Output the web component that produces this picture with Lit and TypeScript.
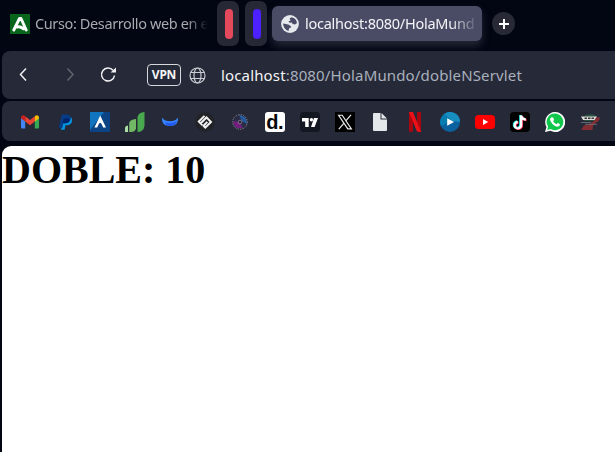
import { LitElement, html, svg, css } from "lit";
import { customElement } from "lit/decorators.js";

const bookmarks = [
  // Gmail
  svg`<path fill="#4285f4" d="M1 5.500V15.500Q1 16.500 2 16.500H5.200V8z"/><path fill="#34a853" d="M14.800 8V16.500H18Q19 16.500 19 15.500V5.500z"/><path fill="#ea4335" d="M5.200 4.200L10 8L14.800 4.200V9.500L10 13.200L5.200 9.500z"/><path fill="#c5221f" d="M1 5.500Q1 3.500 3 3.300Q4.200 3.300 5.200 4.200V9.500L1 6.500z"/><path fill="#fbbc04" d="M19 5.500Q19 3.500 17 3.300Q15.800 3.300 14.800 4.200V9.500L19 6.500z"/>`,
  // PayPal
  svg`<path fill="#0094dc" d="M15.500 5.200Q17.800 6.500 17 9.600Q16 13.300 12 13.300H10.500L9.600 17.800H6L7.500 10z"/><path fill="#063b85" d="M6.700 2.500H12Q16.300 2.800 15.500 7Q14.500 11.300 10 11.300H8.200L7.200 16H3.800z"/><path fill="#00246b" d="M8.600 6.500Q12 5.500 15.400 7.200Q14.300 11.300 10 11.300H7.700z"/>`,
  // Blue peak
  svg`<path fill="#0c4385" d="M0 0H20V20H0z"/><path fill="#1174be" d="M0 0H14L0 18z"/><path fill="#fff" d="M10.200 3.500L16 15.500H13.200L10.200 9L7.200 15.500H4.400z"/><path fill="#fff" d="M10.200 8L12.200 12L10.200 10.800L8.200 12z"/>`,
  // Green bars
  svg`<path fill="#a9dda3" d="M0 15.500Q0 14 3 13.500V20H0z"/><path fill="#72b966" d="M4.200 11Q4.800 7.500 11 7V16.500Q10 20 6 20H4.200z"/><path fill="#48a94e" d="M12.500 5Q13.500 .5 19.500 0V14Q18.500 20 12.500 20z"/>`,
  // Crescent
  svg`<path fill="#3487ff" d="M2 5.500Q4 9 10 9.300Q16 9 18 5.500Q18.800 14 10 14Q1.200 14 2 5.500z"/><path fill="#2459ed" d="M5 10Q10 12.500 17 9Q15.500 14 10 14Q6 14 5 10z"/>`,
  // Interlocked diamond
  svg`<circle cx="10" cy="10" r="9.700" fill="#222326"/><path fill="none" stroke="#f2f2f2" stroke-width="2" d="M9.500 3.900L3.800 9.600L7.300 13.100M5.500 11.500L11 6M10.800 4.600L16 10L10.300 15.500L8.500 13.700L12.300 9.900"/>`,
  // Particle disc
  svg`<circle cx="10" cy="10" r="7" fill="#292b43"/><path fill="#2361aa" d="M9 3Q17 4 17 12L12 9z"/><path fill="#7a1d82" d="M3 9L9 10L13 16Q4 18 3 9z"/><circle cx="10" cy="10" r="7.300" fill="none" stroke="#8c8a96" stroke-width="1" stroke-dasharray="1.300 1.200"/><circle cx="10" cy="10" r="4.500" fill="none" stroke="#3b315a" stroke-dasharray="1 1.500"/><circle cx="10" cy="10" r="1.800" fill="#1f2132" stroke="#918498" stroke-width=".8"/>`,
  // d.
  svg`<rect width="20" height="20" rx="3" fill="#fff"/><text class="dot-logo" x="1.200" y="17">d.</text>`,
  // TradingView
  svg`<rect width="20" height="20" rx="3.500" fill="#131722"/><path fill="#fff" d="M2 6H8.700V15H5.200V9.500H2zM14 6H18L14.600 15H11z"/><circle cx="11.400" cy="7.800" r="1.700" fill="#fff"/>`,
  // X
  svg`<path d="M0 0H20V20H0z"/><path fill="none" stroke="#eee" stroke-width="1.150" d="M3.600 3.200H7.200L16.400 16.900H12.800zM16 2.800L10.800 8.900M9 11.200L3.800 17.200"/>`,
  // Document
  svg`<path fill="#e5e8ea" d="M4 1H10.500V7.500H17V18Q17 19 16 19H4Q3 19 3 18V2Q3 1 4 1zM11.500 1L17 6.500H11.500z"/>`,
  // Netflix
  svg`<path fill="#a80710" d="M4 0H8V19.500L4 20zM12 0H16V20L12 19.500z"/><path fill="#ed1019" d="M4 0H8L16 20L12 19.500z"/>`,
  // Blue play
  svg`<circle cx="10" cy="10" r="10" fill="#0c619f"/><path fill="#178dc0" d="M4 2A10 10 0 0 1 20 10L12 9z"/><path fill="#087daf" d="M4 2L12 9L1 14A10 10 0 0 1 4 2z"/><path fill="#fff" d="M7.200 6.300L14 10L7.200 13.700z"/>`,
  // YouTube
  svg`<rect y="3" width="20" height="14" rx="3.500" fill="#f00"/><path fill="#fff" d="M8 7L13.200 10L8 13z"/>`,
  // TikTok
  svg`<rect width="20" height="20" rx="4" fill="#000"/><g fill="none" stroke-width="2.300"><path stroke="#25f4ee" d="M10.300 3V12.500A3.200 3.200 0 1 1 7 9.500M10.300 3Q11 6.800 15 7"/><path stroke="#fe2c55" d="M11.900 4V13.500A3.200 3.200 0 1 1 8.600 10.500M11.900 4Q12.600 7.600 16.600 8"/><path stroke="#fff" d="M11.100 3.500V13A3.200 3.200 0 1 1 7.800 10M11.100 3.500Q11.800 7.200 15.800 7.500"/></g>`,
  // WhatsApp
  svg`<path fill="#fff" d="M10 0A10 10 0 1 1 5.400 18.800L0 20L1.500 15A10 10 0 0 1 10 0z"/><path fill="#10c64b" d="M10 1.600A8.300 8.300 0 1 1 5.700 17L2.200 18L3.100 14.600A8.300 8.300 0 0 1 10 1.600z"/><path fill="#fff" d="M6.700 5.200L8.200 5.400L9.100 7.900L8.100 9.200Q9.300 11.400 11.500 12.200L12.700 10.900L15 12.100Q15 14.500 12.400 14.800Q10 14.600 7.400 12Q4.900 9.300 5 7.200Q5.200 5.800 6.700 5.200z"/>`,
  // Layered emblem
  svg`<path fill="#28513f" d="M5 3L12 2L16 4V9H4z"/><path fill="#dcdcd8" d="M1 4.500H17L15.500 8H3z"/><path stroke="#34343a" stroke-width="1.500" stroke-dasharray="2.500 1" d="M4.500 6.300H14.500"/><path fill="#842d34" d="M16 5.500H20Q19.500 9 16 10.500L13 13.500L12.500 18H1L4 13.500L9 12.500L14 9z"/><path stroke="#77777c" stroke-width=".8" d="M1 10.500H11M5 12.300H17"/>`,
];

@customElement("app-root")
export class AppRoot extends LitElement {
  static styles = css`
    :host {
      display: flex;
      flex-direction: column;
      height: 452px;
      overflow: hidden;
      background: #020512;
      font-family: "Noto Sans", sans-serif;
    }
    * { box-sizing: border-box; }
    svg { display: block; flex: none; }
    .tabs { display: flex; height: 51px; flex: none; }
    .tab { display: flex; align-items: center; font-size: 14.500px; white-space: nowrap; }
    .plain { width: 209px; height: 48px; padding-left: 10px; gap: 5px; color: #a9aaad; }
    .label { overflow: hidden; line-height: 24px; padding-bottom: 2px; }
    .plain .label { width: 174px; letter-spacing: -.38px; mask-image: linear-gradient(90deg, #000 152px, transparent 173px); }
    .island { width: 22px; height: 45px; margin: 1px 6px 0 0; padding-left: 1px; border-radius: 7px; background: #262935; display: grid; place-items: center; }
    .first { margin-left: 8px; }
    .pill { width: 8px; height: 30px; border-radius: 4px; background: #e54a5c; }
    .violet { background: #4c20ff; }
    .active { width: 210px; height: 35px; margin: 6px 0 0 -1px; padding-left: 9px; gap: 6px; border-radius: 6px; color: #f4f4f7; background: #4a4c66; box-shadow: 0 5px 9px #454b5c80; }
    .active .label { width: 171px; letter-spacing: -.25px; mask-image: linear-gradient(90deg, #000 145px, transparent 174px); }
    .add { width: 23px; height: 23px; margin: 12px 0 0 10px; border-radius: 50%; background: #272a35; display: grid; place-items: center; }
    .toolbar { height: 48px; margin-left: 2px; flex: none; display: flex; align-items: center; background: #262937; border-radius: 8px 0 0 8px; position: relative; }
    .back { margin-left: 11px; }
    .forward { margin-left: 27px; }
    .reload { margin-left: 18px; }
    .vpn { margin-left: 29px; width: 34px; height: 22px; border: 1.500px solid #d6d8dc; border-radius: 4px; color: #f5f5f6; font: bold 12px/20px "Noto Sans", sans-serif; text-align: center; letter-spacing: -.25px; }
    .globe { margin-left: 8px; }
    .address { margin-left: 15px; color: #a9b0bd; font-size: 15px; line-height: 24px; letter-spacing: .15px; white-space: nowrap; }
    .host { color: #f3f4f6; }
    .bookmarks { height: 40px; margin: 2px 0 5px 2px; padding: 1px 0 0 18px; flex: none; display: flex; align-items: center; gap: 15px; background: #262937; border-radius: 8px 0 0 8px; }
    .dot-logo { font: bold 20px "Liberation Sans", sans-serif; letter-spacing: -.3px; fill: #07080a; }
    .page { flex: 1; margin-left: 2px; background: #fff; border-top-left-radius: 9px; overflow: hidden; }
    h1 { margin: 0; color: #000; font: bold 40px/48px "Liberation Serif", serif; white-space: nowrap; }
  `;

  render() {
    return html`
      <div class="tabs">
        <div class="tab plain">
          <svg width="20" height="20"><path fill="#08651c" d="M0 0H20V20H0z" /><path fill="none" stroke="#fff" stroke-width="2.900" stroke-linecap="round" stroke-linejoin="round" d="M3.800 16L9.500 4.500H11L16.200 16M7 13Q10 12 13.500 14.800" /></svg>
          <span class="label">Curso: Desarrollo web en e</span>
        </div>
        <div class="island first"><div class="pill"></div></div>
        <div class="island"><div class="pill violet"></div></div>
        <div class="tab active">
          <svg width="18" height="18"><circle cx="9" cy="9" r="8.900" fill="#e7eaec" /><path fill="#4a4c66" d="M10.500 2.200Q15.500 3.200 16 8L14 9.500L11.500 9L11 7.500L8.500 7.700L7.500 6.500L9.500 5.500L8.700 3.500zM2 8.500L5 9L8 9.800L10.500 12L8 13.500L7.500 16Q2.500 14.500 2 8.500z" /></svg>
          <span class="label">localhost:8080/HolaMund</span>
        </div>
        <div class="add"><svg width="10" height="10"><path stroke="#fff" stroke-width="2" d="M0 5H10M5 0V10" /></svg></div>
      </div>
      <div class="toolbar">
        <svg class="back" width="20" height="20" fill="none" stroke="#f0f1f3" stroke-width="1.500"><path d="M13 3.500L7.500 9.500L13 15.500" /></svg>
        <svg class="forward" width="20" height="20" fill="none" stroke="#62646f" stroke-width="1.500"><path d="M7.500 3.500L13 9.500L7.500 15.500" /></svg>
        <svg class="reload" width="20" height="20"><path fill="none" stroke="#f0f1f3" stroke-width="1.500" d="M15 5.300A6.500 6.500 0 1 0 16.500 10.500" /><path fill="#f0f1f3" d="M18 2.500V7.500H12.500z" /></svg>
        <div class="vpn">VPN</div>
        <svg class="globe" width="17" height="17" fill="none" stroke="#c9ccd2" stroke-width="1.150"><circle cx="8.500" cy="8.500" r="7.500" /><ellipse cx="8.500" cy="8.500" rx="3.500" ry="7.500" /><path d="M1.800 5.500H15.200M1.800 11.500H15.200" /></svg>
        <div class="address"><span class="host">localhost</span>:8080/HolaMundo/dobleNServlet</div>
      </div>
      <div class="bookmarks">${bookmarks.map((icon) => html`<svg width="20" height="20">${icon}</svg>`)}</div>
      <div class="page"><h1>DOBLE: 10</h1></div>
    `;
  }
}
